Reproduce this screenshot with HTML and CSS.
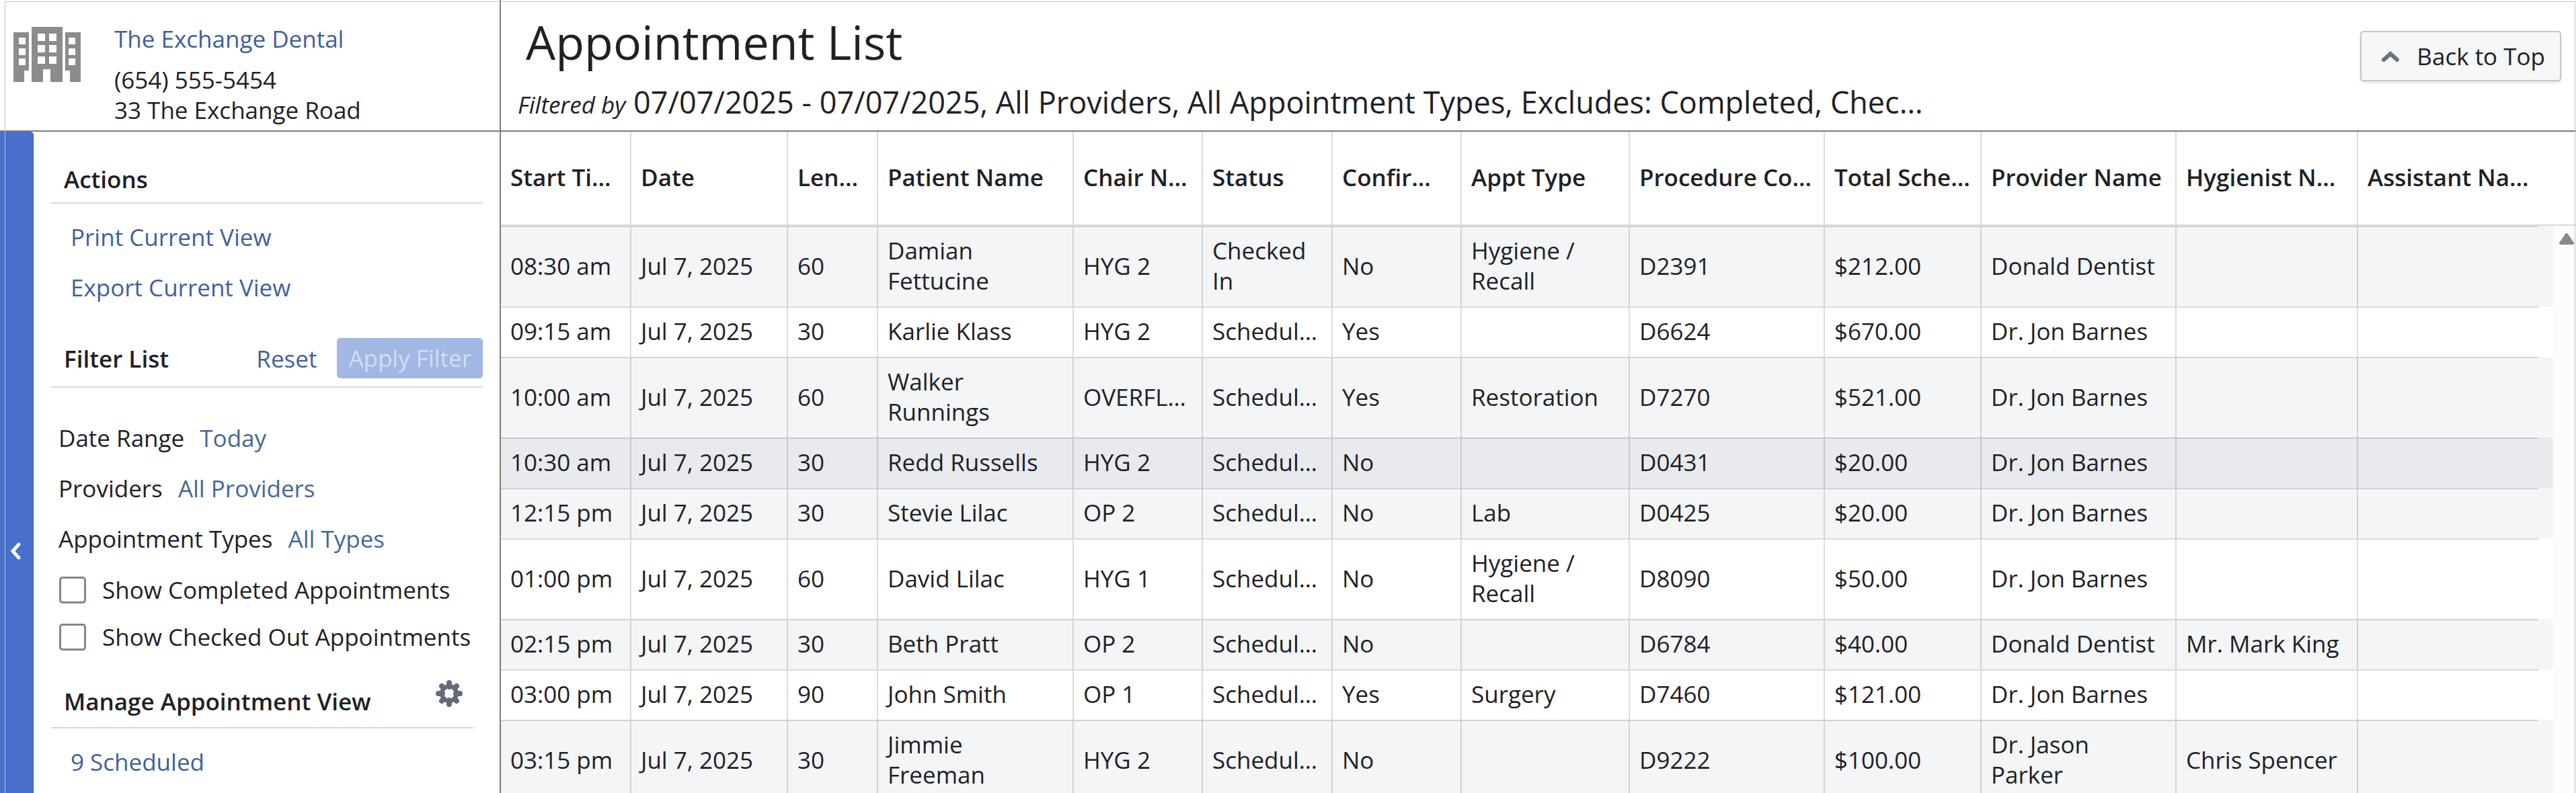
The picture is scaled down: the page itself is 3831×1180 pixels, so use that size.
FILE: index.html
```html
<!DOCTYPE html>
<html lang="en">
<head>
  <meta charset="UTF-8" />
  <meta name="viewport" content="width=device-width, initial-scale=1.0"/>
  <title>Appointment List</title>
  <link rel="stylesheet" href="styles.css">
</head>
<body>

  <header class="topbar">
    <div class="clinic">
      <svg class="clinic-icon" viewBox="0 0 100 82" aria-hidden="true">
        <path fill="#8c8c8c" fill-rule="evenodd" d="M0 8H23V65H16V82H0ZM8 16V26H18V16ZM8 32V42H18V32ZM8 47V57H18V47ZM27 0H73V82H55V63H44V82H27ZM36 10V21H47V10ZM53 10V21H64V10ZM36 27V38H47V27ZM53 27V38H64V27ZM36 44V55H47V44ZM53 44V55H64V44ZM77 8H100V82H84V65H77ZM82 16V26H92V16ZM82 32V42H92V32ZM82 47V57H92V47Z"/>
      </svg>
      <div class="clinic-info">
        <a href="#" class="clinic-name">The Exchange Dental</a>
        <p>(654) 555-5454</p>
        <p>33 The Exchange Road</p>
      </div>
    </div>
    <div class="page-head">
      <div class="page-title">
        <h1>Appointment List</h1>
        <p class="filtered"><em>Filtered by</em> 07/07/2025 - 07/07/2025, All Providers, All Appointment Types, Excludes: Completed, Checked Out</p>
      </div>
      <button type="button" class="back-top">
        <svg viewBox="0 0 26 16" aria-hidden="true"><path d="M3 13L13 4L23 13" fill="none" stroke="#6a7280" stroke-width="6" stroke-linecap="round"/></svg>
        Back to Top
      </button>
    </div>
  </header>

  <div class="content">
    <button type="button" class="collapse" aria-label="Collapse sidebar">
      <svg viewBox="0 0 16 26" aria-hidden="true"><path d="M13 3L4 13L13 23" fill="none" stroke="#fff" stroke-width="5" stroke-linecap="round"/></svg>
    </button>

    <aside class="sidebar">
      <div class="section-head">
        <h2>Actions</h2>
      </div>
      <nav class="links">
        <a href="#">Print Current View</a>
        <a href="#">Export Current View</a>
      </nav>

      <div class="section-head filter-head">
        <h2>Filter List</h2>
        <a href="#">Reset</a>
        <button type="button" class="apply" disabled>Apply Filter</button>
      </div>
      <div class="filters">
        <p>Date Range <a href="#">Today</a></p>
        <p>Providers <a href="#">All Providers</a></p>
        <p>Appointment Types <a href="#">All Types</a></p>
      </div>
      <div class="checks">
        <label><input type="checkbox"> Show Completed Appointments</label>
        <label><input type="checkbox"> Show Checked Out Appointments</label>
      </div>

      <div class="section-head manage-head">
        <h2>Manage Appointment View</h2>
        <button type="button" class="gear" aria-label="View settings">
          <svg viewBox="0 0 40 40" aria-hidden="true">
            <g stroke="#636b7a" stroke-width="8" stroke-linecap="round">
              <path d="M20 4V10M20 30V36M4 20H10M30 20H36M9 9L12 12M28 28L31 31M9 31L12 28M28 12L31 9"/>
            </g>
            <circle cx="20" cy="20" r="11" fill="none" stroke="#636b7a" stroke-width="6"/>
          </svg>
        </button>
      </div>
      <nav class="links">
        <a href="#">9 Scheduled</a>
      </nav>
    </aside>

    <main class="list">
      <table>
        <colgroup>
          <col style="width: 194px"><col style="width: 233px"><col style="width: 134px"><col style="width: 291px">
          <col style="width: 192px"><col style="width: 193px"><col style="width: 192px"><col style="width: 250px">
          <col style="width: 290px"><col style="width: 233px"><col style="width: 290px"><col style="width: 270px">
          <col style="width: 268px"><col style="width: 22px">
        </colgroup>
        <thead>
          <tr>
            <th>Start Time</th><th>Date</th><th>Length</th><th>Patient Name</th><th>Chair Name</th><th>Status</th><th>Confirmed</th><th>Appt Type</th><th>Procedure Codes</th><th>Total Scheduled</th><th>Provider Name</th><th>Hygienist Name</th><th>Assistant Name</th><th class="gutter"></th>
          </tr>
        </thead>
        <tbody>
          <tr class="shade">
            <td>08:30 am</td><td>Jul 7, 2025</td><td>60</td><td>Damian Fettucine</td><td>HYG 2</td><td>Checked In</td><td>No</td><td>Hygiene / Recall</td><td>D2391</td><td>$212.00</td><td>Donald Dentist</td><td></td><td></td><td class="gutter"></td>
          </tr>
          <tr>
            <td>09:15 am</td><td>Jul 7, 2025</td><td>30</td><td>Karlie Klass</td><td>HYG 2</td><td>Scheduled</td><td>Yes</td><td></td><td>D6624</td><td>$670.00</td><td>Dr. Jon Barnes</td><td></td><td></td><td class="gutter"></td>
          </tr>
          <tr class="shade">
            <td>10:00 am</td><td>Jul 7, 2025</td><td>60</td><td>Walker Runnings</td><td>OVERFLOW</td><td>Scheduled</td><td>Yes</td><td>Restoration</td><td>D7270</td><td>$521.00</td><td>Dr. Jon Barnes</td><td></td><td></td><td class="gutter"></td>
          </tr>
          <tr class="active">
            <td>10:30 am</td><td>Jul 7, 2025</td><td>30</td><td>Redd Russells</td><td>HYG 2</td><td>Scheduled</td><td>No</td><td></td><td>D0431</td><td>$20.00</td><td>Dr. Jon Barnes</td><td></td><td></td><td class="gutter"></td>
          </tr>
          <tr class="shade">
            <td>12:15 pm</td><td>Jul 7, 2025</td><td>30</td><td>Stevie Lilac</td><td>OP 2</td><td>Scheduled</td><td>No</td><td>Lab</td><td>D0425</td><td>$20.00</td><td>Dr. Jon Barnes</td><td></td><td></td><td class="gutter"></td>
          </tr>
          <tr>
            <td>01:00 pm</td><td>Jul 7, 2025</td><td>60</td><td>David Lilac</td><td>HYG 1</td><td>Scheduled</td><td>No</td><td>Hygiene / Recall</td><td>D8090</td><td>$50.00</td><td>Dr. Jon Barnes</td><td></td><td></td><td class="gutter"></td>
          </tr>
          <tr class="shade">
            <td>02:15 pm</td><td>Jul 7, 2025</td><td>30</td><td>Beth Pratt</td><td>OP 2</td><td>Scheduled</td><td>No</td><td></td><td>D6784</td><td>$40.00</td><td>Donald Dentist</td><td>Mr. Mark King</td><td></td><td class="gutter"></td>
          </tr>
          <tr>
            <td>03:00 pm</td><td>Jul 7, 2025</td><td>90</td><td>John Smith</td><td>OP 1</td><td>Scheduled</td><td>Yes</td><td>Surgery</td><td>D7460</td><td>$121.00</td><td>Dr. Jon Barnes</td><td></td><td></td><td class="gutter"></td>
          </tr>
          <tr class="shade">
            <td>03:15 pm</td><td>Jul 7, 2025</td><td>30</td><td>Jimmie Freeman</td><td>HYG 2</td><td>Scheduled</td><td>No</td><td></td><td>D9222</td><td>$100.00</td><td>Dr. Jason Parker</td><td>Chris Spencer</td><td></td><td class="gutter"></td>
          </tr>
        </tbody>
      </table>
      <div class="scroll">
        <div class="scroll-head"></div>
        <div class="scroll-track">
          <svg viewBox="0 0 24 18" aria-hidden="true"><path d="M12 2L21 15H3Z" fill="#8a8a8a" stroke="#8a8a8a" stroke-width="4" stroke-linejoin="round"/></svg>
        </div>
      </div>
    </main>
  </div>

</body>
</html>
```
FILE: styles.css
```css
* { margin: 0; padding: 0; box-sizing: border-box; }

body {
  display: flex;
  flex-direction: column;
  height: 100vh;
  overflow: hidden;
  font-family: "Open Sans", sans-serif;
  font-size: 35px;
  line-height: 45px;
  color: #1f2126;
  background-color: #fff;
}

/* thin frame over the whole window */
body::after {
  content: "";
  position: fixed;
  top: 2px; right: 1px; bottom: 0; left: 7px;
  border: 1px solid #c4c4c4;
  border-bottom: none;
  pointer-events: none;
}

a {
  color: #405f9f;
  text-decoration: none;
}

button {
  font: inherit;
  border: none;
  cursor: pointer;
}

svg { display: block; }

/* Top bar */
.topbar {
  display: flex;
  flex: none;
  border-bottom: 2px solid #7c7c7c;
}

.clinic {
  display: flex;
  flex: none;
  width: 745px;
  gap: 50px;
  padding: 35px 20px 8px;
  border-right: 2px solid #7c7c7c;
}

.clinic-icon {
  width: 100px;
  height: 82px;
  margin-top: 5px;
}

.clinic-name {
  display: block;
  margin-bottom: 16px;
}

.page-head {
  display: flex;
  flex: 1;
  min-width: 0;
  justify-content: space-between;
  align-items: flex-start;
  padding: 22px 22px 14px 25px;
}

.page-title {
  width: 69%;
}

h1 {
  margin: 0 0 22px 12px;
  font-size: 70px;
  font-weight: 400;
  line-height: 80px;
}

.filtered {
  font-size: 45px;
  line-height: 56px;
  white-space: nowrap;
  overflow: hidden;
  text-overflow: ellipsis;
}

.filtered em {
  font-size: 35px;
  line-height: 45px;
}

.back-top {
  display: flex;
  flex: none;
  align-items: center;
  gap: 26px;
  margin-top: 24px;
  padding: 13px 22px 13px 30px;
  color: #1f2126;
  background-color: #f5f7f9;
  border: 2px solid #c4c6c8;
  border-radius: 5px;
  box-shadow: 0 3px 4px rgba(0, 0, 0, 0.1);
}

.back-top svg {
  width: 26px;
  height: 16px;
}

/* Content */
.content {
  display: flex;
  flex: 1;
  min-height: 0;
}

.collapse {
  display: flex;
  flex: none;
  align-items: center;
  width: 50px;
  padding: 264px 0 0 15px;
  background-color: #476fcb;
  border-right: 1px solid #3a5fb8;
  border-radius: 0 5px 0 0;
}

.collapse svg {
  width: 16px;
  height: 26px;
}

.sidebar {
  flex: none;
  width: 695px;
  padding: 48px 25px 0;
  border-right: 2px solid #7c7c7c;
}

.section-head {
  display: flex;
  align-items: center;
  padding: 0 0 12px 20px;
  border-bottom: 2px solid #d9dadb;
}

h2 {
  flex: 1;
  font-size: 35px;
  font-weight: 600;
}

.links {
  display: flex;
  flex-direction: column;
  gap: 30px;
  padding: 27px 30px 0;
}

.filter-head {
  margin-top: 53px;
}

.apply {
  height: 60px;
  margin-left: 30px;
  padding: 0 17px 2px;
  color: #d3def3;
  background-color: #a3b7e4;
  border-radius: 5px;
}

.filters {
  display: flex;
  flex-direction: column;
  gap: 30px;
  padding: 52px 0 31px 12px;
}

.filters a {
  margin-left: 14px;
  color: #44689a;
}

.checks {
  display: flex;
  flex-direction: column;
  gap: 25px;
  padding-left: 13px;
}

.checks label {
  display: flex;
  align-items: center;
  gap: 24px;
  white-space: nowrap;
}

.checks input {
  appearance: none;
  flex: none;
  width: 40px;
  height: 40px;
  background-color: #fff;
  border: 3px solid #7f8690;
  border-radius: 5px;
}

.manage-head {
  align-items: flex-start;
  margin: 42px 13px 0 0;
  padding-bottom: 16px;
}

.manage-head h2 {
  padding-top: 9px;
}

.gear {
  width: 40px;
  height: 40px;
  margin-right: 17px;
  background: none;
}

/* Appointment table */
.list {
  display: flex;
  flex: 1;
  min-width: 0;
  align-items: stretch;
  overflow: hidden;
}

table {
  flex: 1;
  width: 100%;
  min-width: 0;
  table-layout: fixed;
  border-collapse: separate;
  border-spacing: 0;
}

th,
td {
  padding: 12px 14px 16px;
  text-align: left;
  vertical-align: middle;
  overflow: hidden;
  text-overflow: ellipsis;
  border-right: 2px solid rgba(0, 0, 0, 0.14);
}

th {
  height: 140px;
  font-weight: 600;
  white-space: nowrap;
  border-bottom: 2px solid #d9dadb;
}

td {
  border-top: 2px solid rgba(0, 0, 0, 0.14);
}

th:nth-child(13),
td:nth-child(13) {
  border-right: none;
}

.gutter {
  padding: 0;
  border-right: none;
}

td.gutter {
  border-top: none;
}

.shade { background-color: #f3f5f7; }
.active { background-color: #e8eaee; }

.scroll {
  display: flex;
  flex: none;
  flex-direction: column;
  width: 34px;
}

.scroll-head {
  height: 140px;
  border-bottom: 2px solid #d9dadb;
}

.scroll-track {
  flex: 1;
  padding: 11px 0 0 8px;
  background-color: #fcfcfc;
}

.scroll-track svg {
  width: 24px;
  height: 18px;
}
```
